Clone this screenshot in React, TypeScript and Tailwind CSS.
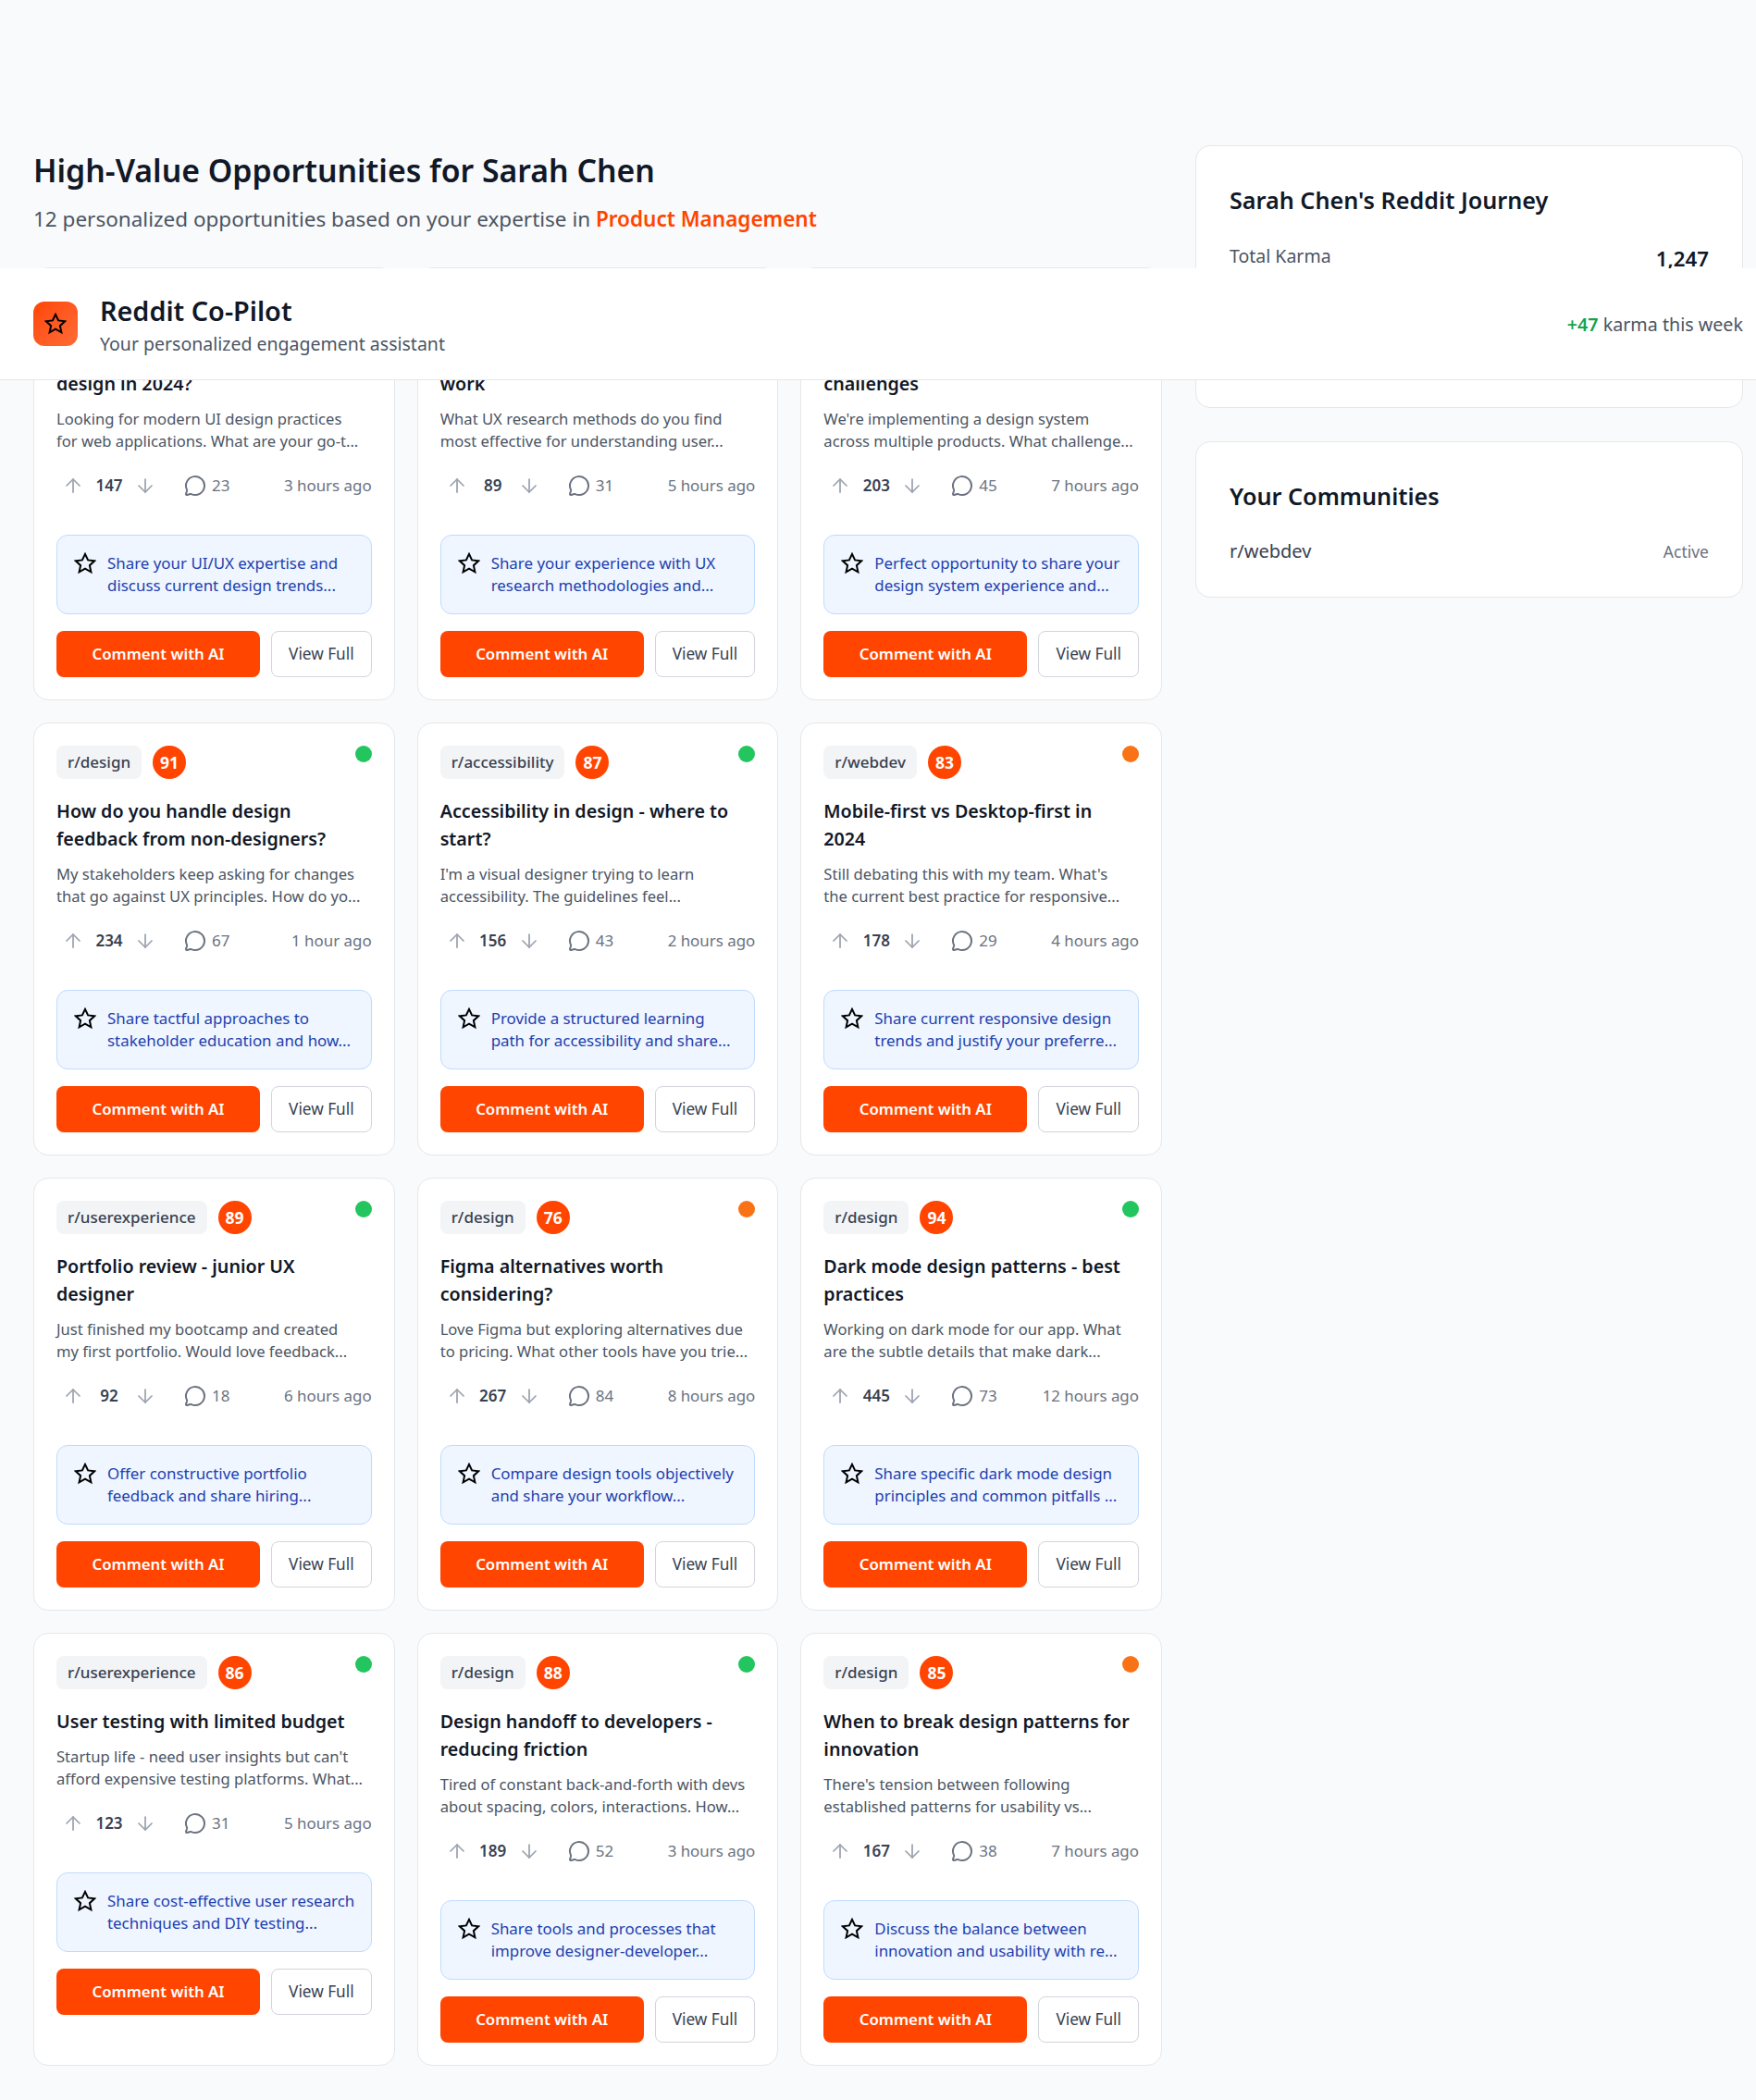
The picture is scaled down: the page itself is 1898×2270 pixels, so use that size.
import { ArrowDown, ArrowUp, MessageCircle } from 'lucide-react'

interface Opportunity {
  sub: string
  score: number
  dot: 'green' | 'orange'
  title: string
  desc: string
  ups: number
  comments: number
  time: string
  tip: string
}

const opportunities: Opportunity[] = [
  { sub: 'r/webdev', score: 92, dot: 'green', title: 'What are the best UI trends for\ndesign in 2024?', desc: 'Looking for modern UI design practices\nfor web applications. What are your go-t...', ups: 147, comments: 23, time: '3 hours ago', tip: 'Share your UI/UX expertise and\ndiscuss current design trends...' },
  { sub: 'r/userexperience', score: 88, dot: 'green', title: 'UX research methods that actually\nwork', desc: 'What UX research methods do you find\nmost effective for understanding user...', ups: 89, comments: 31, time: '5 hours ago', tip: 'Share your experience with UX\nresearch methodologies and...' },
  { sub: 'r/design', score: 90, dot: 'green', title: 'Design system implementation\nchallenges', desc: "We're implementing a design system\nacross multiple products. What challenge...", ups: 203, comments: 45, time: '7 hours ago', tip: 'Perfect opportunity to share your\ndesign system experience and...' },
  { sub: 'r/design', score: 91, dot: 'green', title: 'How do you handle design\nfeedback from non-designers?', desc: 'My stakeholders keep asking for changes\nthat go against UX principles. How do yo...', ups: 234, comments: 67, time: '1 hour ago', tip: 'Share tactful approaches to\nstakeholder education and how...' },
  { sub: 'r/accessibility', score: 87, dot: 'green', title: 'Accessibility in design - where to\nstart?', desc: "I'm a visual designer trying to learn\naccessibility. The guidelines feel...", ups: 156, comments: 43, time: '2 hours ago', tip: 'Provide a structured learning\npath for accessibility and share...' },
  { sub: 'r/webdev', score: 83, dot: 'orange', title: 'Mobile-first vs Desktop-first in\n2024', desc: "Still debating this with my team. What's\nthe current best practice for responsive...", ups: 178, comments: 29, time: '4 hours ago', tip: 'Share current responsive design\ntrends and justify your preferre...' },
  { sub: 'r/userexperience', score: 89, dot: 'green', title: 'Portfolio review - junior UX\ndesigner', desc: 'Just finished my bootcamp and created\nmy first portfolio. Would love feedback...', ups: 92, comments: 18, time: '6 hours ago', tip: 'Offer constructive portfolio\nfeedback and share hiring...' },
  { sub: 'r/design', score: 76, dot: 'orange', title: 'Figma alternatives worth\nconsidering?', desc: 'Love Figma but exploring alternatives due\nto pricing. What other tools have you trie...', ups: 267, comments: 84, time: '8 hours ago', tip: 'Compare design tools objectively\nand share your workflow...' },
  { sub: 'r/design', score: 94, dot: 'green', title: 'Dark mode design patterns - best\npractices', desc: 'Working on dark mode for our app. What\nare the subtle details that make dark...', ups: 445, comments: 73, time: '12 hours ago', tip: 'Share specific dark mode design\nprinciples and common pitfalls ...' },
  { sub: 'r/userexperience', score: 86, dot: 'green', title: 'User testing with limited budget', desc: "Startup life - need user insights but can't\nafford expensive testing platforms. What...", ups: 123, comments: 31, time: '5 hours ago', tip: 'Share cost-effective user research\ntechniques and DIY testing...' },
  { sub: 'r/design', score: 88, dot: 'green', title: 'Design handoff to developers -\nreducing friction', desc: 'Tired of constant back-and-forth with devs\nabout spacing, colors, interactions. How...', ups: 189, comments: 52, time: '3 hours ago', tip: 'Share tools and processes that\nimprove designer-developer...' },
  { sub: 'r/design', score: 85, dot: 'orange', title: 'When to break design patterns for\ninnovation', desc: "There's tension between following\nestablished patterns for usability vs...", ups: 167, comments: 38, time: '7 hours ago', tip: 'Discuss the balance between\ninnovation and usability with re...' },
]

function StarIcon() {
  return (
    <svg viewBox="0 0 24 24" fill="none" stroke="currentColor" strokeWidth="2" strokeLinejoin="miter" className="h-6 w-6 shrink-0 text-black">
      <path d="M12 1.9l3.1 6.5 7.1.9-5.3 4.9 1.5 7.1-6.4-3.7-6.4 3.7 1.5-7.1-5.3-4.9 7.1-.9z" />
    </svg>
  )
}

function OpportunityCard({ item }: { item: Opportunity }) {
  return (
    <div className="rounded-2xl border border-[#e5e7eb] bg-white p-6">
      <div className="flex items-start justify-between">
        <div className="flex items-center gap-3">
          <span className="flex h-9 items-center rounded-lg bg-[#f3f4f6] px-3 text-[17px] font-medium text-[#374151]">{item.sub}</span>
          <span className="flex h-9 w-9 items-center justify-center rounded-full bg-[#ff4500] text-[17.5px] font-bold text-white">{item.score}</span>
        </div>
        <span className={item.dot === 'green' ? 'h-[18px] w-[18px] rounded-full bg-[#22c55e]' : 'h-[18px] w-[18px] rounded-full bg-[#f97316]'} />
      </div>
      <h3 className="mt-5 mb-[11px] text-[19.7px] leading-[30px] font-semibold whitespace-pre-line text-[#111827]">{item.title}</h3>
      <p className="text-[16.6px] leading-6 whitespace-pre-line text-[#4b5563]">{item.desc}</p>
      <div className="mt-[18px] mb-[35px] flex h-9 items-center justify-between">
        <div className="flex items-center">
          <div className="flex items-center pl-1.5">
            <ArrowUp className="h-6 w-6 text-[#9ca3af]" strokeWidth={1.75} />
            <span className="w-[54px] text-center text-[17px] font-semibold text-[#374151]">{item.ups}</span>
            <ArrowDown className="h-6 w-6 text-[#9ca3af]" strokeWidth={1.75} />
          </div>
          <div className="ml-[30px] flex items-center gap-1.5 text-[17px] text-[#6b7280]">
            <MessageCircle className="h-6 w-6" strokeWidth={2} />
            <span>{item.comments}</span>
          </div>
        </div>
        <span className="text-[16.9px] text-[#6b7280]">{item.time}</span>
      </div>
      <div className="flex items-start gap-3 rounded-xl border border-[#bfdbfe] bg-[#eff6ff] p-[18px] text-[16.9px] leading-6 text-[#1e40af]">
        <StarIcon />
        <span className="whitespace-pre">{item.tip}</span>
      </div>
      <div className="mt-[18px] flex gap-3">
        <button className="h-[50px] w-[220px] rounded-lg bg-[#ff4500] text-[16.8px] font-semibold text-white">Comment with AI</button>
        <button className="h-[50px] flex-1 rounded-lg border border-[#d1d5db] bg-white text-[17.2px] font-normal text-[#374151]">View Full</button>
      </div>
    </div>
  )
}

export default function App() {
  return (
    <div className="relative min-h-[2270px] bg-[#f9fafb] pt-[157px] pr-[14px] pb-9 pl-9 font-['Noto_Sans',sans-serif]">
      <header className="absolute top-[290px] right-0 left-0 z-10 flex h-[121px] items-center justify-between border-b border-[#e5e7eb] bg-white pr-[14px] pl-9">
        <div className="flex items-center gap-6">
          <div className="flex h-12 w-12 items-center justify-center rounded-xl bg-gradient-to-br from-[#ff4500] to-[#ff6b35]">
            <StarIcon />
          </div>
          <div className="pt-1">
            <h1 className="text-[28.8px] leading-10 font-semibold text-[#111827]">Reddit Co-Pilot</h1>
            <p className="text-[19.5px] leading-8 text-[#4b5563]">Your personalized engagement assistant</p>
          </div>
        </div>
        <div className="pt-0.5 text-[19.7px] text-[#4b5563]">
          <span className="font-semibold text-[#16a34a]">+47</span> karma this week
        </div>
      </header>

      <div className="flex gap-9">
        <main className="min-w-0 flex-1">
          <h2 className="mt-[3px] text-[33.8px] leading-12 font-semibold text-[#111827]">High-Value Opportunities for Sarah Chen</h2>
          <p className="mt-3 mb-9 text-[22.5px] leading-[33px] text-[#4b5563]">
            12 personalized opportunities based on your expertise in <span className="font-semibold text-[#ff4500]">Product Management</span>
          </p>
          <div className="grid grid-cols-3 gap-6">
            {opportunities.map((item) => (
              <OpportunityCard key={item.title} item={item} />
            ))}
          </div>
        </main>

        <aside className="flex w-[592px] shrink-0 flex-col gap-9 self-start">
          <div className="h-[284px] rounded-2xl border border-[#e5e7eb] bg-white p-9">
            <h3 className="text-[25.2px] leading-11 font-semibold text-[#111827]">Sarah Chen's Reddit Journey</h3>
            <div className="mt-[26px] flex items-start justify-between">
              <span className="text-[19.5px] leading-[26px] text-[#4b5563]">Total Karma</span>
              <span className="text-[22.3px] leading-8 font-semibold text-[#111827]">1,247</span>
            </div>
          </div>
          <div className="rounded-2xl border border-[#e5e7eb] bg-white p-9">
            <h3 className="text-[25.2px] leading-11 font-semibold text-[#111827]">Your Communities</h3>
            <div className="mt-[25px] flex items-center justify-between">
              <span className="text-xl leading-[26px] text-[#374151]">r/webdev</span>
              <span className="text-[17.5px] text-[#6b7280]">Active</span>
            </div>
          </div>
        </aside>
      </div>
    </div>
  )
}
